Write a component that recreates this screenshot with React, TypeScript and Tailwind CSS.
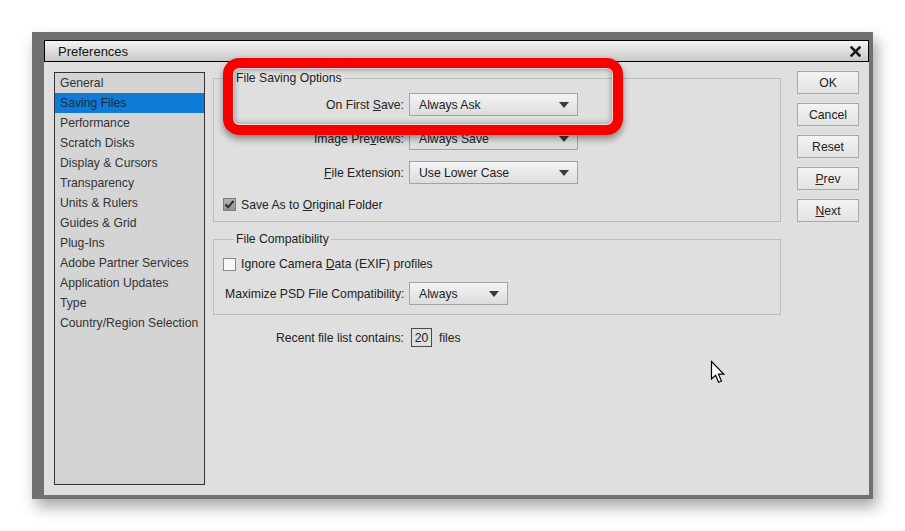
import type { ReactNode } from 'react';

const SECTIONS = [
  'General',
  'Saving Files',
  'Performance',
  'Scratch Disks',
  'Display & Cursors',
  'Transparency',
  'Units & Rulers',
  'Guides & Grid',
  'Plug-Ins',
  'Adobe Partner Services',
  'Application Updates',
  'Type',
  'Country/Region Selection',
];

function Caret() {
  return (
    <svg width="10" height="6" viewBox="0 0 10 6" className="shrink-0">
      <path d="M0 0 L10 0 L5 6 Z" fill="#3a3a3a" />
    </svg>
  );
}

function Dropdown({ value, width }: { value: string; width: string }) {
  return (
    <div
      className={`${width} h-[23px] flex items-center justify-between pl-[9px] pr-[8px] border border-[#a3a3a3] bg-linear-to-b from-[#f5f5f5] to-[#dcdcdc] text-[#222]`}
    >
      <span className="pt-[2px]">{value}</span>
      <Caret />
    </div>
  );
}

function Checkbox({ checked }: { checked?: boolean }) {
  return (
    <div
      className={[
        'w-[13px] h-[13px] border flex items-center justify-center shrink-0',
        checked ? 'border-[#7d7d7d] bg-linear-to-b from-[#b4b4b4] to-[#939393]' : 'border-[#8a8a8a] bg-[#f7f7f7]',
      ].join(' ')}
    >
      {checked && (
        <svg width="11" height="11" viewBox="0 0 11 11">
          <path d="M1.5 5.5 L4.2 8.3 L9.5 1.8" fill="none" stroke="#2e2e2e" strokeWidth="2" />
        </svg>
      )}
    </div>
  );
}

function Btn({ children }: { children: ReactNode }) {
  return (
    <div className="w-[62px] h-[23px] flex items-center justify-center pt-[2px] border border-[#a8a8a8] bg-linear-to-b from-[#f4f4f4] to-[#e2e2e2] text-[#222]">
      {children}
    </div>
  );
}

function Group({ label, children, height }: { label: string; children: ReactNode; height: string }) {
  return (
    <div className={`relative w-[568px] ${height} border border-[#bdbdbd]`}>
      <span className="absolute left-[20px] -top-[9px] px-[2px] bg-[#dfdfdf] text-[#222] leading-[16px]">{label}</span>
      {children}
    </div>
  );
}

export default function App() {
  return (
    <div className="relative w-[905px] h-[531px] overflow-hidden bg-white pt-[32px] pl-[32px] font-['Liberation_Sans',Arial,sans-serif] text-[12.2px]">
      <div className="w-[841px] h-[467px] bg-[#717171] pt-[8px] pl-[12px] shadow-[4px_8px_14px_rgba(0,0,0,0.35)]">
        <div className="w-[825px] h-[455px] bg-[#dfdfdf] flex flex-col">
          {/* title bar */}
          <div className="h-[22px] shrink-0 border border-black bg-linear-to-b from-[#f3f3f3] to-[#c9c9c9] flex items-center justify-between pl-[13px] pr-[7px]">
            <span className="text-[#111] text-[13px] pt-[1px]">Preferences</span>
            <svg width="11" height="11" viewBox="0 0 11 11">
              <path d="M1.5 1.5 L9.5 9.5 M9.5 1.5 L1.5 9.5" stroke="#1a1a1a" strokeWidth="2.6" strokeLinecap="square" />
            </svg>
          </div>

          <div className="flex pt-[10px] pl-[10px]">
            {/* section list */}
            <div className="w-[151px] h-[413px] border border-[#333] bg-[#d4d4d4] text-[#333]">
              {SECTIONS.map((s) => (
                <div
                  key={s}
                  className={`h-[20px] flex items-center pl-[5px] whitespace-nowrap ${s === 'Saving Files' ? 'bg-[#0f7bd8] text-[#1c2a3a]' : ''}`}
                >
                  {s}
                </div>
              ))}
            </div>

            {/* main */}
            <div className="ml-[8px] w-[568px] pt-[6px] text-[#222]">
              <Group label="File Saving Options" height="h-[144px]">
                <div className="pt-[14px] flex flex-col gap-[11px]">
                  <div className="flex items-center">
                    <span className="w-[195px] pr-[5px] pt-[2px] text-right whitespace-nowrap">
                      On First <u>S</u>ave:
                    </span>
                    <Dropdown value="Always Ask" width="w-[169px]" />
                  </div>
                  <div className="flex items-center">
                    <span className="w-[195px] pr-[5px] pt-[2px] text-right whitespace-nowrap">
                      Image Pre<u>v</u>iews:
                    </span>
                    <Dropdown value="Always Save" width="w-[169px]" />
                  </div>
                  <div className="flex items-center">
                    <span className="w-[195px] pr-[5px] pt-[2px] text-right whitespace-nowrap">
                      <u>F</u>ile Extension:
                    </span>
                    <Dropdown value="Use Lower Case" width="w-[169px]" />
                  </div>
                </div>
                <div className="mt-[14px] pl-[9px] flex items-center gap-[5px] h-[13px]">
                  <Checkbox checked />
                  <span className="pt-[1px]">
                    Save As to <u>O</u>riginal Folder
                  </span>
                </div>
              </Group>

              <div className="mt-[17px]">
                <Group label="File Compatibility" height="h-[76px]">
                  <div className="pt-[17px] pl-[9px] flex items-center gap-[5px] h-[31px]">
                    <Checkbox />
                    <span className="pt-[1px]">
                      Ignore Camera <u>D</u>ata (EXIF) profiles
                    </span>
                  </div>
                  <div className="mt-[11px] pl-[11px] flex items-center">
                    <span className="w-[184px] pr-[5px] pt-[2px] text-right whitespace-nowrap">
                      Maximize PSD File Compatibility:
                    </span>
                    <Dropdown value="Always" width="w-[99px]" />
                  </div>
                </Group>
              </div>

              <div className="mt-[12px] flex items-center">
                <span className="w-[191px] pt-[2px] text-right whitespace-nowrap">Recent file list contains:</span>
                <div className="ml-[7px] w-[21px] h-[19px] pt-[1px] border border-[#4a4a4a] flex items-center justify-center">20</div>
                <span className="ml-[7px] pt-[2px]">files</span>
              </div>
            </div>

            {/* buttons */}
            <div className="ml-[16px] -mt-[1px] flex flex-col gap-[9px]">
              <Btn>OK</Btn>
              <Btn>Cancel</Btn>
              <Btn>Reset</Btn>
              <Btn>
                <span>
                  <u>P</u>rev
                </span>
              </Btn>
              <Btn>
                <span>
                  <u>N</u>ext
                </span>
              </Btn>
            </div>
          </div>
        </div>
      </div>

      {/* red highlight */}
      <div className="absolute left-[223px] top-[58px] w-[400px] h-[77px] rounded-[16px] border-[10px] border-[#f60000] shadow-[0_4px_7px_rgba(0,0,0,0.4),inset_0_0_0_1px_rgba(255,220,220,0.9),inset_0_0_5px_2px_rgba(0,0,0,0.3)]" />

      {/* cursor */}
      <svg className="absolute left-[710px] top-[360px]" width="16" height="26" viewBox="0 0 16 26">
        <path
          d="M1.5 1.5 L1.5 19 L5.6 15.2 L8.6 22.2 L11.4 21 L8.5 14.2 L13.8 14.2 Z"
          fill="#fff"
          stroke="#000"
          strokeWidth="1.2"
          strokeLinejoin="miter"
        />
      </svg>
    </div>
  );
}
